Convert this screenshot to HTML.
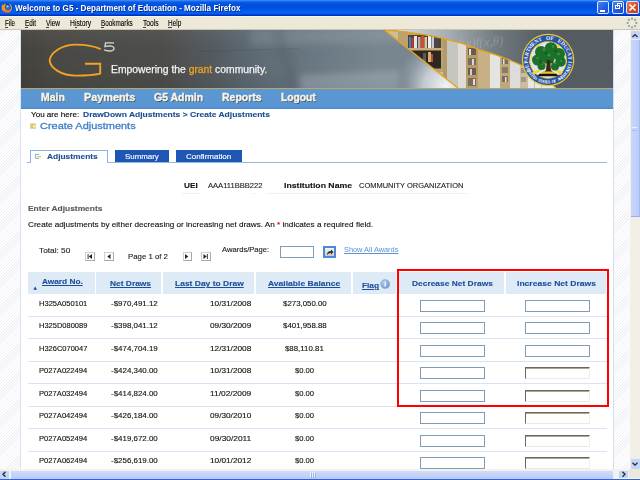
<!DOCTYPE html><html><head><meta charset="utf-8"><style>
html,body{margin:0;padding:0;width:640px;height:480px;overflow:hidden;background:#fff;}
body{position:relative;font-family:"Liberation Sans",sans-serif;}
.t{position:absolute;white-space:nowrap;-webkit-text-stroke:0.12px currentColor;}
.r{position:absolute;}
</style></head><body>
<div class="r" style="left:0px;top:0px;width:640px;height:16px;background:linear-gradient(#3f8ff8 0px,#2a7af2 1px,#0a5ae6 2px,#0050de 5px,#0052e2 9px,#0062f4 11.5px,#0060f0 14px,#0036c8 14.8px,#0030b8 16px);"></div>
<svg class="r" style="left:0px;top:1px" width="14" height="14" viewBox="0 0 14 14"><circle cx="7.6" cy="6.6" r="3.6" fill="#14246a"/><circle cx="7.8" cy="6.4" r="2.7" fill="#2f6ad0"/><circle cx="7.4" cy="5.4" r="1.1" fill="#9cc4f2"/><path d="M2.4 3.2 L3.6 3.8 L5 2.6 L6 3.4 Q4.6 4.6 4.8 6.8 Q5.2 9.2 7.8 9.6 Q10.2 9.6 10.9 7.2 Q11.4 8.8 10.6 10.2 Q9.2 11.8 6.8 11.7 Q2.8 11.4 1.6 8 Q1.2 5.2 2.4 3.2Z" fill="#f59a18"/><path d="M1.9 8.6 Q3 11.4 6.8 11.7 Q9.4 11.8 10.6 10.2 Q8.4 11 6.2 10.6 Q3.4 10 1.9 8.6Z" fill="#dc4a18"/><path d="M8.8 2.6 Q11.8 3.4 11.8 7 Q11.6 9.2 10.6 10.2 Q11.2 8.2 10.9 6.2 Q10.4 4 8.8 2.6Z" fill="#f6c828"/><path d="M3 3.5 L3.4 2.4 L4.2 3.3Z" fill="#3a1a08"/></svg>
<div class="t" style="left:14.60px;top:2px;font-size:9.5px;line-height:11px;font-weight:bold;color:#fff;letter-spacing:0px;transform:scaleX(0.8529);transform-origin:0 0;-webkit-text-stroke:0;text-shadow:1px 1px 0 #0a2a80;">Welcome to G5 - Department of Education - Mozilla Firefox</div>
<div class="r" style="left:597.2px;top:1.2px;width:12.3px;height:12.8px;background:linear-gradient(135deg,#4a82f0,#1f5ae6 60%,#1a50d8);border:1px solid #d8e4fa;border-radius:2px;box-sizing:border-box;"></div>
<div class="r" style="left:611.7px;top:1.2px;width:12.4px;height:12.8px;background:linear-gradient(135deg,#4a82f0,#1f5ae6 60%,#1a50d8);border:1px solid #d8e4fa;border-radius:2px;box-sizing:border-box;"></div>
<div class="r" style="left:626px;top:1.2px;width:12.6px;height:12.8px;background:linear-gradient(135deg,#f07a50,#dc4a24 60%,#c83a18);border:1px solid #d8e4fa;border-radius:2px;box-sizing:border-box;"></div>
<div class="r" style="left:600px;top:10px;width:5px;height:2px;background:#fff;"></div>
<div class="r" style="left:615px;top:5px;width:5px;height:4px;border:1px solid #fff;box-sizing:border-box;"></div>
<div class="r" style="left:617px;top:3px;width:5px;height:4px;border:1px solid #fff;border-bottom:none;box-sizing:border-box;"></div>
<svg class="r" style="left:628px;top:3px" width="9" height="9" viewBox="0 0 9 9"><path d="M1.5 1.5L7.5 7.5M7.5 1.5L1.5 7.5" stroke="#fff" stroke-width="1.6"/></svg>
<div class="r" style="left:0px;top:16px;width:640px;height:14px;background:#ece9d8;border-top:1px solid #f8f6ee;box-sizing:border-box;"></div>
<div class="r" style="left:0px;top:29px;width:640px;height:1px;background:#c9c5b2;"></div>
<div class="t" style="left:4.70px;top:18px;font-size:8.6px;line-height:10px;font-weight:normal;color:#000;letter-spacing:0px;transform:scaleX(0.7288);transform-origin:0 0;">File</div>
<div class="r" style="left:4.7px;top:27px;width:3.2px;height:0.8px;background:#444;"></div>
<div class="t" style="left:25.00px;top:18px;font-size:8.6px;line-height:10px;font-weight:normal;color:#000;letter-spacing:0px;transform:scaleX(0.7423);transform-origin:0 0;">Edit</div>
<div class="r" style="left:25px;top:27px;width:3.2px;height:0.8px;background:#444;"></div>
<div class="t" style="left:46.00px;top:18px;font-size:8.6px;line-height:10px;font-weight:normal;color:#000;letter-spacing:0px;transform:scaleX(0.7574);transform-origin:0 0;">View</div>
<div class="r" style="left:46px;top:27px;width:3.2px;height:0.8px;background:#444;"></div>
<div class="t" style="left:69.50px;top:18px;font-size:8.6px;line-height:10px;font-weight:normal;color:#000;letter-spacing:0px;transform:scaleX(0.7886);transform-origin:0 0;">History</div>
<div class="r" style="left:74.7px;top:27px;width:2.6px;height:0.8px;background:#444;"></div>
<div class="t" style="left:101.00px;top:18px;font-size:8.6px;line-height:10px;font-weight:normal;color:#000;letter-spacing:0px;transform:scaleX(0.7393);transform-origin:0 0;">Bookmarks</div>
<div class="r" style="left:101px;top:27px;width:3.2px;height:0.8px;background:#444;"></div>
<div class="t" style="left:142.70px;top:18px;font-size:8.6px;line-height:10px;font-weight:normal;color:#000;letter-spacing:0px;transform:scaleX(0.7770);transform-origin:0 0;">Tools</div>
<div class="r" style="left:142.7px;top:27px;width:3.2px;height:0.8px;background:#444;"></div>
<div class="t" style="left:168.40px;top:18px;font-size:8.6px;line-height:10px;font-weight:normal;color:#000;letter-spacing:0px;transform:scaleX(0.7520);transform-origin:0 0;">Help</div>
<div class="r" style="left:168.4px;top:27px;width:3.2px;height:0.8px;background:#444;"></div>
<svg class="r" style="left:626px;top:17px" width="12" height="12" viewBox="0 0 12 12"><circle cx="10.30" cy="6.00" r="1.15" fill="#a2a2a2"/><circle cx="9.04" cy="9.04" r="1.15" fill="#a2a2a2"/><circle cx="6.00" cy="10.30" r="1.15" fill="#a2a2a2"/><circle cx="2.96" cy="9.04" r="1.15" fill="#a2a2a2"/><circle cx="1.70" cy="6.00" r="1.15" fill="#a2a2a2"/><circle cx="2.96" cy="2.96" r="1.15" fill="#a2a2a2"/><circle cx="6.00" cy="1.70" r="1.15" fill="#a2a2a2"/><circle cx="9.04" cy="2.96" r="1.15" fill="#a2a2a2"/></svg>
<div class="r" style="left:0px;top:30px;width:629px;height:440px;background:repeating-linear-gradient(-45deg,#ffffff 0px,#ffffff 1.2px,#f0f2f6 1.1px,#f0f2f6 2.2px);"></div>
<div class="r" style="left:20px;top:30px;width:594px;height:440px;background:#fff;border-left:1px solid #dde3f4;border-right:1px solid #d3dcf2;box-sizing:border-box;"></div>
<svg class="r" style="left:21px;top:30px" width="592" height="58" viewBox="21 30 592 58">
<defs>
<linearGradient id="bgL" x1="21" y1="0" x2="613" y2="0" gradientUnits="userSpaceOnUse">
 <stop offset="0" stop-color="#43423d"/><stop offset="0.05" stop-color="#494844"/><stop offset="0.24" stop-color="#4c4d4a"/>
 <stop offset="0.32" stop-color="#535a5e"/><stop offset="0.40" stop-color="#5e6b75"/>
 <stop offset="0.50" stop-color="#6b7984"/><stop offset="0.6" stop-color="#788690"/><stop offset="1" stop-color="#7a8892"/>
</linearGradient>
<linearGradient id="vsh" x1="0" y1="30" x2="0" y2="88" gradientUnits="userSpaceOnUse">
 <stop offset="0" stop-color="#ffffff" stop-opacity="0.05"/><stop offset="0.6" stop-color="#000" stop-opacity="0"/><stop offset="1" stop-color="#000" stop-opacity="0.06"/>
</linearGradient>
<radialGradient id="cloud1" cx="446" cy="86" r="50" gradientUnits="userSpaceOnUse">
 <stop offset="0" stop-color="#f2f4f6" stop-opacity="1"/><stop offset="0.45" stop-color="#d0d6db" stop-opacity="0.85"/><stop offset="1" stop-color="#9aa6ae" stop-opacity="0"/>
</radialGradient>
<linearGradient id="sky" x1="400" y1="0" x2="560" y2="0" gradientUnits="userSpaceOnUse">
 <stop offset="0" stop-color="#d2d7db"/><stop offset="0.3" stop-color="#a6aeb4"/><stop offset="0.6" stop-color="#727b81"/><stop offset="0.85" stop-color="#596166"/><stop offset="1" stop-color="#545c61"/>
</linearGradient>
<linearGradient id="shelfg" x1="385" y1="0" x2="560" y2="0" gradientUnits="userSpaceOnUse">
 <stop offset="0" stop-color="#c9b68a"/><stop offset="0.55" stop-color="#cdbf9c"/><stop offset="1" stop-color="#e4e2da"/>
</linearGradient>
<filter id="soft" x="-20%" y="-50%" width="140%" height="200%"><feGaussianBlur stdDeviation="3"/></filter>
<clipPath id="lens"><path d="M385 30.5 Q421 59 458 88 L556 88 Q530 64 480 50 Q448 36 392 30.5 Z"/></clipPath>
</defs>
<rect x="21" y="30" width="592" height="58" fill="url(#bgL)"/>
<rect x="21" y="30" width="592" height="58" fill="url(#vsh)"/>
<g filter="url(#soft)"><path d="M250 30 L400 30 L400 42 L250 46Z" fill="#9aa6b0" opacity="0.25"/><path d="M300 75 L400 70 L400 92 L300 92Z" fill="#b8c2ca" opacity="0.35"/><path d="M270 30 L284 30 L302 88 L288 88Z" fill="#3a4650" opacity="0.15"/></g><path d="M200 51 L300 48 L300 49 L200 52Z" fill="#2a3038" opacity="0.12"/>

<rect x="330" y="30" width="130" height="58" fill="url(#cloud1)"/>
<!-- upper-right sky/chalkboard -->
<path d="M392 30 Q448 36 480 50 Q530 64 556 88 L613 88 L613 30 Z" fill="url(#sky)"/>
<text x="458" y="48" font-family="Liberation Serif" font-style="italic" font-size="13" fill="#c4cacf" opacity="0.3" transform="rotate(-4 458 48)">f(x)f(x,θ)</text>
<!-- bookshelf lens -->
<g clip-path="url(#lens)">
<rect x="385" y="30" width="175" height="58" fill="#cdbd98"/>
<rect x="398" y="30" width="46" height="42" fill="#bca270"/>
<rect x="408" y="35" width="33" height="13" fill="#4a443c"/>
<rect x="409" y="37" width="2" height="11" fill="#4a7ab8"/><rect x="411.5" y="38" width="2" height="10" fill="#c83a2a"/><rect x="414" y="36" width="3" height="12" fill="#e8e6dc"/><rect x="418" y="37" width="2.5" height="11" fill="#b0b0a8"/><rect x="421" y="36" width="3" height="12" fill="#d84a30"/><rect x="424.5" y="37" width="2.5" height="11" fill="#d8c8a0"/><rect x="428" y="36" width="3" height="12" fill="#f0f0ec"/><rect x="431.5" y="37" width="2.5" height="11" fill="#c8ccd0"/><rect x="435" y="36" width="3" height="12" fill="#4a4a48"/>
<rect x="408" y="48" width="35" height="2.5" fill="#c8ae7c"/>
<rect x="410" y="50.5" width="31" height="18" fill="#2c2822"/><rect x="428" y="52" width="3" height="10" fill="#d8b070"/><rect x="431" y="54" width="2" height="8" fill="#c84a30"/><rect x="423" y="53" width="3" height="9" fill="#5a5a58"/>
<rect x="443" y="33" width="4" height="55" fill="#b49a68"/>
<rect x="447" y="36" width="11" height="52" fill="#c6c6c0"/>
<rect x="458" y="38" width="8" height="50" fill="#dedcd4"/>
<rect x="466" y="44" width="12" height="44" fill="#b89c68"/>
<rect x="468" y="48" width="8" height="7" fill="#6a5c4c"/><rect x="468" y="58" width="8" height="7" fill="#7a6c5c"/><rect x="468" y="68" width="8" height="7" fill="#6a5c4c"/><rect x="468" y="78" width="8" height="8" fill="#7a6c5c"/>
<rect x="469" y="49" width="2" height="6" fill="#e8e0d0"/><rect x="472" y="59" width="2" height="6" fill="#d8d8d8"/><rect x="470" y="69" width="2" height="6" fill="#d0d0d0"/><rect x="473" y="79" width="2" height="6" fill="#e0e0e0"/>
<rect x="478" y="46" width="12" height="42" fill="#c7b184"/>
<rect x="490" y="50" width="10" height="38" fill="#e4e4e0"/>
<rect x="500" y="54" width="10" height="34" fill="#c0a878"/>
<rect x="502" y="58" width="6" height="6" fill="#7a6c5c"/><rect x="502" y="67" width="6" height="6" fill="#8a7c6c"/><rect x="502" y="76" width="6" height="6" fill="#7a6c5c"/>
<rect x="503" y="59" width="1.5" height="5" fill="#e0e0e0"/><rect x="505" y="77" width="1.5" height="5" fill="#e0e0e0"/>
<rect x="510" y="58" width="10" height="30" fill="#dcdcd8"/>
<rect x="520" y="62" width="8" height="26" fill="#cbbd9e"/>
<rect x="521" y="68" width="5" height="5" fill="#9a9088"/><rect x="521" y="77" width="5" height="5" fill="#a09890"/>
<rect x="528" y="64" width="30" height="24" fill="#e8e8e6"/>
<rect x="534" y="66" width="1" height="22" fill="#c0c0bc"/><rect x="541" y="70" width="1" height="18" fill="#c8c8c4"/>
</g>
<path d="M385 30.5 Q421 59 458 88" stroke="#e6a31c" stroke-width="1.3" fill="none"/>
<path d="M392 30.5 Q448 36 480 50 Q530 64 556 88" stroke="#e6a31c" stroke-width="1.3" fill="none"/>
<path d="M385 30.5 L392 30.5" stroke="#e6a31c" stroke-width="1.3"/>
<!-- G5 logo -->
<path d="M100.8 49.2 C94 45.8 86 44.6 76 44.6 C61 44.6 50.5 53 49.6 60.3 C50.5 68 61 75.6 76 75.6 C88 75.6 96 74.6 100.2 73.6 L100.2 63.8 L85 63.8" stroke="#f2a224" stroke-width="1.9" fill="none"/>
<path d="M114 42.8 L105.5 42.8 L105 46.6 Q107 45.8 109.5 45.8 Q114 46 114 48.5 Q114 51 109.5 51 Q106 51 104 49.8" stroke="#d6d6d6" stroke-width="1.3" fill="none"/>
<!-- seal -->
<circle cx="548.1" cy="60" r="26.2" fill="#f2c81e"/>
<circle cx="548.1" cy="60" r="25" fill="#2452a8"/>
<g font-family="Liberation Serif" font-size="5.4" font-weight="bold" fill="#f4f6fa"><text x="529.87" y="69.16" transform="rotate(-116.7 529.87 69.16)" text-anchor="middle">D</text><text x="528.50" y="65.65" transform="rotate(-106.1 528.50 65.65)" text-anchor="middle">E</text><text x="527.79" y="61.95" transform="rotate(-95.5 527.79 61.95)" text-anchor="middle">P</text><text x="527.78" y="58.18" transform="rotate(-84.9 527.78 58.18)" text-anchor="middle">A</text><text x="528.46" y="54.47" transform="rotate(-74.3 528.46 54.47)" text-anchor="middle">R</text><text x="529.82" y="50.95" transform="rotate(-63.7 529.82 50.95)" text-anchor="middle">T</text><text x="531.80" y="47.74" transform="rotate(-53.0 531.80 47.74)" text-anchor="middle">M</text><text x="534.34" y="44.94" transform="rotate(-42.4 534.34 44.94)" text-anchor="middle">E</text><text x="537.34" y="42.67" transform="rotate(-31.8 537.34 42.67)" text-anchor="middle">N</text><text x="540.72" y="40.98" transform="rotate(-21.2 540.72 40.98)" text-anchor="middle">T</text><text x="548.10" y="39.60" transform="rotate(0.0 548.10 39.60)" text-anchor="middle">O</text><text x="551.86" y="39.95" transform="rotate(10.6 551.86 39.95)" text-anchor="middle">F</text><text x="558.86" y="42.67" transform="rotate(31.8 558.86 42.67)" text-anchor="middle">E</text><text x="561.86" y="44.94" transform="rotate(42.4 561.86 44.94)" text-anchor="middle">D</text><text x="564.40" y="47.74" transform="rotate(53.0 564.40 47.74)" text-anchor="middle">U</text><text x="566.38" y="50.95" transform="rotate(63.7 566.38 50.95)" text-anchor="middle">C</text><text x="567.74" y="54.47" transform="rotate(74.3 567.74 54.47)" text-anchor="middle">A</text><text x="568.42" y="58.18" transform="rotate(84.9 568.42 58.18)" text-anchor="middle">T</text><text x="568.41" y="61.95" transform="rotate(95.5 568.41 61.95)" text-anchor="middle">I</text><text x="567.70" y="65.65" transform="rotate(106.1 567.70 65.65)" text-anchor="middle">O</text><text x="566.33" y="69.16" transform="rotate(116.7 566.33 69.16)" text-anchor="middle">N</text></g>
<g font-family="Liberation Serif" font-size="4.3" font-weight="bold" fill="#f4f6fa"><text x="527.48" y="71.27" transform="rotate(61.3 527.48 71.27)" text-anchor="middle">U</text><text x="528.62" y="73.14" transform="rotate(56.0 528.62 73.14)" text-anchor="middle">N</text><text x="529.92" y="74.90" transform="rotate(50.7 529.92 74.90)" text-anchor="middle">I</text><text x="531.39" y="76.52" transform="rotate(45.3 531.39 76.52)" text-anchor="middle">T</text><text x="532.99" y="78.00" transform="rotate(40.0 532.99 78.00)" text-anchor="middle">E</text><text x="534.73" y="79.33" transform="rotate(34.7 534.73 79.33)" text-anchor="middle">D</text><text x="538.54" y="81.47" transform="rotate(24.0 538.54 81.47)" text-anchor="middle">S</text><text x="540.58" y="82.26" transform="rotate(18.7 540.58 82.26)" text-anchor="middle">T</text><text x="542.68" y="82.87" transform="rotate(13.3 542.68 82.87)" text-anchor="middle">A</text><text x="544.83" y="83.27" transform="rotate(8.0 544.83 83.27)" text-anchor="middle">T</text><text x="547.01" y="83.47" transform="rotate(2.7 547.01 83.47)" text-anchor="middle">E</text><text x="549.19" y="83.47" transform="rotate(-2.7 549.19 83.47)" text-anchor="middle">S</text><text x="553.52" y="82.87" transform="rotate(-13.3 553.52 82.87)" text-anchor="middle">O</text><text x="555.62" y="82.26" transform="rotate(-18.7 555.62 82.26)" text-anchor="middle">F</text><text x="559.61" y="80.49" transform="rotate(-29.3 559.61 80.49)" text-anchor="middle">A</text><text x="561.47" y="79.33" transform="rotate(-34.7 561.47 79.33)" text-anchor="middle">M</text><text x="563.21" y="78.00" transform="rotate(-40.0 563.21 78.00)" text-anchor="middle">E</text><text x="564.81" y="76.52" transform="rotate(-45.3 564.81 76.52)" text-anchor="middle">R</text><text x="566.28" y="74.90" transform="rotate(-50.7 566.28 74.90)" text-anchor="middle">I</text><text x="567.58" y="73.14" transform="rotate(-56.0 567.58 73.14)" text-anchor="middle">C</text><text x="568.72" y="71.27" transform="rotate(-61.3 568.72 71.27)" text-anchor="middle">A</text></g>
<circle cx="530" cy="62" r="0.9" fill="#fff"/><circle cx="566.2" cy="62" r="0.9" fill="#fff"/>
<circle cx="548.1" cy="60" r="18.8" fill="#f2c81e"/>
<circle cx="548.1" cy="60" r="17.9" fill="#dbe6f2"/>
<g fill="#f3d23a"><path d="M548 66 L531 56 L531.5 60Z M548 66 L532 72 L534 75Z M548 66 L565 56 L564.5 60Z M548 66 L563 72 L561 75Z M548 64 L536 46 L539 45Z M548 64 L560 46 L557 45Z M548 64 L548 43 L546 43Z"/></g>
<g fill="#1d7029">
<circle cx="541" cy="52" r="6"/><circle cx="551" cy="48.5" r="6.3"/><circle cx="559" cy="54" r="6"/><circle cx="537.5" cy="60" r="5.5"/><circle cx="560.5" cy="61.5" r="5.3"/><circle cx="548" cy="57" r="7"/><circle cx="541.5" cy="66" r="4"/><circle cx="555" cy="66.5" r="4"/>
</g>
<g fill="#38984a" opacity="0.85"><circle cx="544" cy="49.5" r="1.4"/><circle cx="553" cy="46.5" r="1.3"/><circle cx="558.5" cy="54" r="1.4"/><circle cx="537.5" cy="58" r="1.2"/><circle cx="549" cy="55" r="1.5"/><circle cx="561" cy="61" r="1.1"/><circle cx="542" cy="64" r="1.1"/><circle cx="555" cy="63" r="1.2"/></g>
<g fill="#145a20"><circle cx="546" cy="53" r="1.5"/><circle cx="556" cy="51" r="1.4"/><circle cx="541" cy="62" r="1.6"/><circle cx="552" cy="62" r="1.5"/></g>
<path d="M547 60 L546 70 L542 74.5 L555 74.5 L551 70 L550 60 Z" fill="#3a2812"/>
<path d="M537 76.3 L559 76.3 L556 73.5 L540 73.5Z" fill="#1a1408"/>
<path d="M540 73.8 L556 73.8 L553 71.5 L543 71.5Z" fill="#e8c030"/>
</svg>
<div class="t" style="left:110.70px;top:63px;font-size:10.6px;line-height:12px;font-weight:normal;color:#f4f4f4;letter-spacing:0px;transform:scaleX(0.9766);transform-origin:0 0;-webkit-text-stroke:0.25px #f4f4f4;">Empowering the <span style="color:#f5a623;-webkit-text-stroke-color:#f5a623">grant</span> community<span style="color:#f5a623">.</span></div>
<div class="r" style="left:21px;top:88px;width:592px;height:1px;background:#c8a458;"></div>
<div class="r" style="left:21px;top:89px;width:592px;height:19.6px;background:linear-gradient(#5b97d3 0px,#5a96d2 18px,#4c89cf 19.6px);"></div>
<div class="t" style="left:41.25px;top:92px;font-size:10.3px;line-height:11px;font-weight:bold;color:#f8f4e8;letter-spacing:0px;transform:scaleX(1.0123);transform-origin:0 0;-webkit-text-stroke:0.35px #f8f4e8;text-shadow:0.7px 0.7px 0.5px #3a4a5a;">Main</div>
<div class="t" style="left:83.75px;top:92px;font-size:10.3px;line-height:11px;font-weight:bold;color:#f8f4e8;letter-spacing:0px;transform:scaleX(1.0531);transform-origin:0 0;-webkit-text-stroke:0.35px #f8f4e8;text-shadow:0.7px 0.7px 0.5px #3a4a5a;">Payments</div>
<div class="t" style="left:153.80px;top:92px;font-size:10.3px;line-height:11px;font-weight:bold;color:#f8f4e8;letter-spacing:0px;transform:scaleX(1.0195);transform-origin:0 0;-webkit-text-stroke:0.35px #f8f4e8;text-shadow:0.7px 0.7px 0.5px #3a4a5a;">G5 Admin</div>
<div class="t" style="left:222.30px;top:92px;font-size:10.3px;line-height:11px;font-weight:bold;color:#f8f4e8;letter-spacing:0px;transform:scaleX(1.0201);transform-origin:0 0;-webkit-text-stroke:0.35px #f8f4e8;text-shadow:0.7px 0.7px 0.5px #3a4a5a;">Reports</div>
<div class="t" style="left:280.80px;top:92px;font-size:10.3px;line-height:11px;font-weight:bold;color:#f8f4e8;letter-spacing:0px;transform:scaleX(0.9975);transform-origin:0 0;-webkit-text-stroke:0.35px #f8f4e8;text-shadow:0.7px 0.7px 0.5px #3a4a5a;">Logout</div>
<div class="t" style="left:30.60px;top:110px;font-size:8px;line-height:9px;font-weight:normal;color:#000;letter-spacing:0px;transform:scaleX(1.0085);transform-origin:0 0;">You are here:</div>
<div class="t" style="left:83.00px;top:110px;font-size:8px;line-height:9px;font-weight:bold;color:#1d4e90;letter-spacing:0px;transform:scaleX(1.0613);transform-origin:0 0;">DrawDown Adjustments &gt; Create Adjustments</div>
<svg class="r" style="left:29px;top:122px" width="8" height="8"><rect x="1" y="1.2" width="6" height="5.8" fill="#c4d8f6"/><circle cx="3.9" cy="4.1" r="2.4" fill="#f5c816"/><rect x="4" y="3.3" width="2" height="2" fill="#f4f4f0"/></svg>
<div class="t" style="left:40.30px;top:120px;font-size:9.5px;line-height:11px;font-weight:normal;color:#3f7fc6;letter-spacing:0px;transform:scaleX(1.1532);transform-origin:0 0;-webkit-text-stroke:0.3px #3f7fc6;">Create Adjustments</div>
<div class="r" style="left:27px;top:162px;width:580px;height:1px;background:#95b8e2;"></div>
<div class="r" style="left:30px;top:150px;width:78px;height:13px;background:#fff;border:1px solid #8fb2e0;border-bottom:none;box-sizing:border-box;"></div>
<svg class="r" style="left:34px;top:153px" width="9" height="7"><path d="M5.2 1.4 L1.4 1.4 L1.4 5.4 L5.2 5.4" stroke="#6aa0e0" stroke-width="0.9" fill="none"/><rect x="3.3" y="3" width="3.7" height="1.1" fill="#f2c410"/></svg>
<div class="t" style="left:47.20px;top:152px;font-size:8px;line-height:9px;font-weight:bold;color:#1d4e90;letter-spacing:0px;transform:scaleX(1.0465);transform-origin:0 0;">Adjustments</div>
<div class="r" style="left:114.5px;top:150px;width:54.3px;height:12px;background:#1d57b3;"></div>
<div class="r" style="left:175.75px;top:150px;width:66px;height:12px;background:#1d57b3;"></div>
<div class="t" style="left:125.00px;top:152px;font-size:8px;line-height:9px;font-weight:normal;color:#fff;letter-spacing:0px;transform:scaleX(0.9861);transform-origin:0 0;">Summary</div>
<div class="t" style="left:185.75px;top:152px;font-size:8px;line-height:9px;font-weight:normal;color:#fff;letter-spacing:0px;transform:scaleX(0.9978);transform-origin:0 0;">Confirmation</div>
<div class="t" style="left:183.75px;top:181px;font-size:8px;line-height:9px;font-weight:bold;color:#111;letter-spacing:0px;transform:scaleX(1.0310);transform-origin:0 0;">UEI</div>
<div class="t" style="left:208.00px;top:181px;font-size:8px;line-height:9px;font-weight:normal;color:#222;letter-spacing:0px;transform:scaleX(0.9474);transform-origin:0 0;">AAA111BBB222</div>
<div class="t" style="left:284.00px;top:181px;font-size:8px;line-height:9px;font-weight:bold;color:#111;letter-spacing:0px;transform:scaleX(1.0851);transform-origin:0 0;">Institution Name</div>
<div class="t" style="left:359.00px;top:181px;font-size:8px;line-height:9px;font-weight:normal;color:#222;letter-spacing:0px;transform:scaleX(0.9346);transform-origin:0 0;">COMMUNITY ORGANIZATION</div>
<div class="r" style="left:182px;top:193px;width:19px;height:1px;background:#f0f0f0;"></div>
<div class="r" style="left:251px;top:193px;width:6px;height:1px;background:#f4f4f4;"></div>
<div class="r" style="left:267px;top:193px;width:201px;height:1px;background:#f0f0f0;"></div>
<div class="t" style="left:27.90px;top:204px;font-size:8px;line-height:9px;font-weight:bold;color:#5a5a5a;letter-spacing:0px;transform:scaleX(1.0505);transform-origin:0 0;">Enter Adjustments</div>
<div class="t" style="left:27.90px;top:220px;font-size:8px;line-height:9px;font-weight:normal;color:#111;letter-spacing:0px;transform:scaleX(1.0184);transform-origin:0 0;">Create adjustments by either decreasing or increasing net draws. An <span style="color:#e00">*</span> indicates a required field.</div>
<div class="t" style="left:39.00px;top:246px;font-size:8px;line-height:9px;font-weight:normal;color:#222;letter-spacing:0px;transform:scaleX(1.0350);transform-origin:0 0;">Total: 50</div>
<div class="r" style="left:85.3px;top:252px;width:9.5px;height:9px;background:#fff;border:1px solid #d0d0d0;border-right-color:#a8a8a8;border-bottom-color:#a8a8a8;box-sizing:border-box;"></div><svg class="r" style="left:85px;top:252px" width="10" height="9"><rect x="2.5" y="2" width="1.2" height="5" fill="#555"/><path d="M7 2 L3.8 4.5 L7 7Z" fill="#222"/></svg>
<div class="r" style="left:104px;top:252px;width:9.5px;height:9px;background:#fff;border:1px solid #d0d0d0;border-right-color:#a8a8a8;border-bottom-color:#a8a8a8;box-sizing:border-box;"></div><svg class="r" style="left:104px;top:252px" width="10" height="9"><path d="M6.5 2 L3.3 4.5 L6.5 7Z" fill="#222"/></svg>
<div class="r" style="left:182.5px;top:252px;width:9.5px;height:9px;background:#fff;border:1px solid #d0d0d0;border-right-color:#a8a8a8;border-bottom-color:#a8a8a8;box-sizing:border-box;"></div><svg class="r" style="left:182px;top:252px" width="10" height="9"><path d="M3 2 L6.2 4.5 L3 7Z" fill="#222"/></svg>
<div class="r" style="left:201px;top:252px;width:9.5px;height:9px;background:#fff;border:1px solid #d0d0d0;border-right-color:#a8a8a8;border-bottom-color:#a8a8a8;box-sizing:border-box;"></div><svg class="r" style="left:201px;top:252px" width="10" height="9"><path d="M2.5 2 L5.7 4.5 L2.5 7Z" fill="#222"/><rect x="5.8" y="2" width="1.2" height="5" fill="#555"/></svg>
<div class="t" style="left:127.80px;top:252px;font-size:8px;line-height:9px;font-weight:normal;color:#222;letter-spacing:0px;transform:scaleX(0.9750);transform-origin:0 0;">Page 1 of 2</div>
<div class="t" style="left:222.25px;top:246px;font-size:7px;line-height:7px;font-weight:normal;color:#222;letter-spacing:0px;transform:scaleX(1.0851);transform-origin:0 0;">Awards/Page:</div>
<div class="r" style="left:280px;top:246px;width:34px;height:12px;background:#fff;border:1px solid #7f9db9;box-sizing:border-box;"></div>
<div class="r" style="left:323px;top:245.6px;width:12.6px;height:12.2px;background:linear-gradient(#f4f4f4,#c8c8c8);border:2px solid #4d88d8;box-sizing:border-box;"></div>
<svg class="r" style="left:323px;top:246px" width="13" height="12"><path d="M4 9 Q4 5 8 5 L8 3.5 L10.5 6 L8 8.5 L8 7 Q5.5 7 4 9Z" fill="#333"/></svg>
<div class="t" style="left:344.40px;top:246px;font-size:7px;line-height:7px;font-weight:normal;color:#5a92d6;letter-spacing:0px;transform:scaleX(1.0528);transform-origin:0 0;text-decoration:underline;-webkit-text-stroke:0;">Show All Awards</div>
<div class="r" style="left:27.5px;top:272px;width:67.1px;height:21.5px;background:#deebf7;"></div>
<div class="r" style="left:96.25px;top:272px;width:65.0px;height:21.5px;background:#deebf7;"></div>
<div class="r" style="left:163px;top:272px;width:90.75px;height:21.5px;background:#deebf7;"></div>
<div class="r" style="left:255.5px;top:272px;width:95.25px;height:21.5px;background:#deebf7;"></div>
<div class="r" style="left:352.5px;top:272px;width:43.5px;height:21.5px;background:#deebf7;"></div>
<div class="r" style="left:399px;top:272px;width:104.75px;height:21.5px;background:#deebf7;"></div>
<div class="r" style="left:505.6px;top:272px;width:100.4px;height:21.5px;background:#deebf7;"></div>
<div class="t" style="left:42.00px;top:277px;font-size:7.5px;line-height:9px;font-weight:bold;color:#1d4e9a;letter-spacing:0px;transform:scaleX(1.1028);transform-origin:0 0;text-decoration:underline;">Award No.</div>
<svg class="r" style="left:33px;top:286px" width="5" height="4"><path d="M0.3 3.8 L2.2 0.5 L4.1 3.8Z" fill="#1d4e9a"/></svg>
<div class="t" style="left:109.50px;top:279px;font-size:7.5px;line-height:9px;font-weight:bold;color:#1d4e9a;letter-spacing:0px;transform:scaleX(1.1178);transform-origin:0 0;text-decoration:underline;">Net Draws</div>
<div class="t" style="left:175.00px;top:279px;font-size:7.5px;line-height:9px;font-weight:bold;color:#1d4e9a;letter-spacing:0px;transform:scaleX(1.1298);transform-origin:0 0;text-decoration:underline;">Last Day to Draw</div>
<div class="t" style="left:268.25px;top:279px;font-size:7.5px;line-height:9px;font-weight:bold;color:#1d4e9a;letter-spacing:0px;transform:scaleX(1.1377);transform-origin:0 0;text-decoration:underline;">Available Balance</div>
<div class="t" style="left:361.75px;top:281px;font-size:7.5px;line-height:9px;font-weight:bold;color:#1d4e9a;letter-spacing:0px;transform:scaleX(1.1026);transform-origin:0 0;text-decoration:underline;">Flag</div>
<svg class="r" style="left:379.5px;top:278.8px" width="10.5" height="10.5"><defs><radialGradient id="ig" cx="0.4" cy="0.35" r="0.7"><stop offset="0" stop-color="#b8d2f2"/><stop offset="1" stop-color="#5a8fd4"/></radialGradient></defs><circle cx="5.2" cy="5.1" r="4.6" fill="url(#ig)" stroke="#aeb8c4" stroke-width="0.8"/><rect x="4.6" y="3.6" width="1.2" height="4.2" fill="#fff"/><rect x="4.6" y="2.2" width="1.2" height="0.9" fill="#fff"/></svg>
<div class="t" style="left:411.90px;top:279px;font-size:7.5px;line-height:9px;font-weight:bold;color:#1d4e9a;letter-spacing:0px;transform:scaleX(1.1210);transform-origin:0 0;">Decrease Net Draws</div>
<div class="t" style="left:517.25px;top:279px;font-size:7.5px;line-height:9px;font-weight:bold;color:#1d4e9a;letter-spacing:0px;transform:scaleX(1.1416);transform-origin:0 0;">Increase Net Draws</div>
<div class="r" style="left:27.5px;top:315.8px;width:579.5px;height:1px;background:#d8e4f3;"></div>
<div class="t" style="left:38.70px;top:300px;font-size:7px;line-height:7px;font-weight:normal;color:#111;letter-spacing:0px;transform:scaleX(1.0790);transform-origin:0 0;">H325A050101</div>
<div class="t" style="left:111.25px;top:300px;font-size:7px;line-height:7px;font-weight:normal;color:#111;letter-spacing:0px;transform:scaleX(1.1331);transform-origin:0 0;">-$970,491.12</div>
<div class="t" style="left:210.00px;top:300px;font-size:7px;line-height:7px;font-weight:normal;color:#111;letter-spacing:0px;transform:scaleX(1.1774);transform-origin:0 0;">10/31/2008</div>
<div class="t" style="left:282.52px;top:300px;font-size:7px;line-height:7px;font-weight:normal;color:#111;letter-spacing:0px;transform:scaleX(1.1239);transform-origin:0 0;">$273,050.00</div>
<div class="r" style="left:420px;top:299.9px;width:64.8px;height:12px;background:#fff;border:1px solid #7f9db9;box-sizing:border-box;"></div>
<div class="r" style="left:525.25px;top:299.9px;width:64.5px;height:12px;background:#fff;border:1px solid #7f9db9;box-sizing:border-box;"></div>
<div class="r" style="left:27.5px;top:338.3px;width:579.5px;height:1px;background:#d8e4f3;"></div>
<div class="t" style="left:38.70px;top:322px;font-size:7px;line-height:7px;font-weight:normal;color:#111;letter-spacing:0px;transform:scaleX(1.0698);transform-origin:0 0;">H325D080089</div>
<div class="t" style="left:111.25px;top:322px;font-size:7px;line-height:7px;font-weight:normal;color:#111;letter-spacing:0px;transform:scaleX(1.1331);transform-origin:0 0;">-$398,041.12</div>
<div class="t" style="left:210.00px;top:322px;font-size:7px;line-height:7px;font-weight:normal;color:#111;letter-spacing:0px;transform:scaleX(1.1774);transform-origin:0 0;">09/30/2009</div>
<div class="t" style="left:282.52px;top:322px;font-size:7px;line-height:7px;font-weight:normal;color:#111;letter-spacing:0px;transform:scaleX(1.1239);transform-origin:0 0;">$401,958.88</div>
<div class="r" style="left:420px;top:322.4px;width:64.8px;height:12px;background:#fff;border:1px solid #7f9db9;box-sizing:border-box;"></div>
<div class="r" style="left:525.25px;top:322.4px;width:64.5px;height:12px;background:#fff;border:1px solid #7f9db9;box-sizing:border-box;"></div>
<div class="r" style="left:27.5px;top:360.8px;width:579.5px;height:1px;background:#d8e4f3;"></div>
<div class="t" style="left:38.70px;top:345px;font-size:7px;line-height:7px;font-weight:normal;color:#111;letter-spacing:0px;transform:scaleX(1.0698);transform-origin:0 0;">H326C070047</div>
<div class="t" style="left:111.25px;top:345px;font-size:7px;line-height:7px;font-weight:normal;color:#111;letter-spacing:0px;transform:scaleX(1.1331);transform-origin:0 0;">-$474,704.19</div>
<div class="t" style="left:210.00px;top:345px;font-size:7px;line-height:7px;font-weight:normal;color:#111;letter-spacing:0px;transform:scaleX(1.1774);transform-origin:0 0;">12/31/2008</div>
<div class="t" style="left:285.02px;top:345px;font-size:7px;line-height:7px;font-weight:normal;color:#111;letter-spacing:0px;transform:scaleX(1.1227);transform-origin:0 0;">$88,110.81</div>
<div class="r" style="left:420px;top:344.9px;width:64.8px;height:12px;background:#fff;border:1px solid #7f9db9;box-sizing:border-box;"></div>
<div class="r" style="left:525.25px;top:344.9px;width:64.5px;height:12px;background:#fff;border:1px solid #7f9db9;box-sizing:border-box;"></div>
<div class="r" style="left:27.5px;top:383.3px;width:579.5px;height:1px;background:#d8e4f3;"></div>
<div class="t" style="left:38.70px;top:367px;font-size:7px;line-height:7px;font-weight:normal;color:#111;letter-spacing:0px;transform:scaleX(1.0884);transform-origin:0 0;">P027A022494</div>
<div class="t" style="left:111.25px;top:367px;font-size:7px;line-height:7px;font-weight:normal;color:#111;letter-spacing:0px;transform:scaleX(1.1331);transform-origin:0 0;">-$424,340.00</div>
<div class="t" style="left:210.00px;top:367px;font-size:7px;line-height:7px;font-weight:normal;color:#111;letter-spacing:0px;transform:scaleX(1.1774);transform-origin:0 0;">10/31/2008</div>
<div class="t" style="left:294.90px;top:367px;font-size:7px;line-height:7px;font-weight:normal;color:#111;letter-spacing:0px;transform:scaleX(1.0846);transform-origin:0 0;">$0.00</div>
<div class="r" style="left:420px;top:367.4px;width:64.8px;height:12px;background:#fff;border:1px solid #7f9db9;box-sizing:border-box;"></div>
<div class="r" style="left:525.25px;top:367.4px;width:64.5px;height:12px;background:#fff;border-style:solid;border-width:1px 1px 1px 1px;border-color:#6a685c #eeeeec #efe6e6 #6a685c;box-shadow:inset 0 1px 0 #a9a798;box-sizing:border-box;"></div>
<div class="r" style="left:27.5px;top:405.8px;width:579.5px;height:1px;background:#d8e4f3;"></div>
<div class="t" style="left:38.70px;top:390px;font-size:7px;line-height:7px;font-weight:normal;color:#111;letter-spacing:0px;transform:scaleX(1.0884);transform-origin:0 0;">P027A032494</div>
<div class="t" style="left:111.25px;top:390px;font-size:7px;line-height:7px;font-weight:normal;color:#111;letter-spacing:0px;transform:scaleX(1.1331);transform-origin:0 0;">-$414,824.00</div>
<div class="t" style="left:210.00px;top:390px;font-size:7px;line-height:7px;font-weight:normal;color:#111;letter-spacing:0px;transform:scaleX(1.1951);transform-origin:0 0;">11/02/2009</div>
<div class="t" style="left:294.90px;top:390px;font-size:7px;line-height:7px;font-weight:normal;color:#111;letter-spacing:0px;transform:scaleX(1.0846);transform-origin:0 0;">$0.00</div>
<div class="r" style="left:420px;top:389.9px;width:64.8px;height:12px;background:#fff;border:1px solid #7f9db9;box-sizing:border-box;"></div>
<div class="r" style="left:525.25px;top:389.9px;width:64.5px;height:12px;background:#fff;border-style:solid;border-width:1px 1px 1px 1px;border-color:#6a685c #eeeeec #efe6e6 #6a685c;box-shadow:inset 0 1px 0 #a9a798;box-sizing:border-box;"></div>
<div class="r" style="left:27.5px;top:428.3px;width:579.5px;height:1px;background:#d8e4f3;"></div>
<div class="t" style="left:38.70px;top:412px;font-size:7px;line-height:7px;font-weight:normal;color:#111;letter-spacing:0px;transform:scaleX(1.0884);transform-origin:0 0;">P027A042494</div>
<div class="t" style="left:111.25px;top:412px;font-size:7px;line-height:7px;font-weight:normal;color:#111;letter-spacing:0px;transform:scaleX(1.1331);transform-origin:0 0;">-$426,184.00</div>
<div class="t" style="left:210.00px;top:412px;font-size:7px;line-height:7px;font-weight:normal;color:#111;letter-spacing:0px;transform:scaleX(1.1774);transform-origin:0 0;">09/30/2010</div>
<div class="t" style="left:294.90px;top:412px;font-size:7px;line-height:7px;font-weight:normal;color:#111;letter-spacing:0px;transform:scaleX(1.0846);transform-origin:0 0;">$0.00</div>
<div class="r" style="left:420px;top:412.4px;width:64.8px;height:12px;background:#fff;border:1px solid #7f9db9;box-sizing:border-box;"></div>
<div class="r" style="left:525.25px;top:412.4px;width:64.5px;height:12px;background:#fff;border-style:solid;border-width:1px 1px 1px 1px;border-color:#6a685c #eeeeec #efe6e6 #6a685c;box-shadow:inset 0 1px 0 #a9a798;box-sizing:border-box;"></div>
<div class="r" style="left:27.5px;top:450.8px;width:579.5px;height:1px;background:#d8e4f3;"></div>
<div class="t" style="left:38.70px;top:435px;font-size:7px;line-height:7px;font-weight:normal;color:#111;letter-spacing:0px;transform:scaleX(1.0884);transform-origin:0 0;">P027A052494</div>
<div class="t" style="left:111.25px;top:435px;font-size:7px;line-height:7px;font-weight:normal;color:#111;letter-spacing:0px;transform:scaleX(1.1331);transform-origin:0 0;">-$419,672.00</div>
<div class="t" style="left:210.00px;top:435px;font-size:7px;line-height:7px;font-weight:normal;color:#111;letter-spacing:0px;transform:scaleX(1.1951);transform-origin:0 0;">09/30/2011</div>
<div class="t" style="left:294.90px;top:435px;font-size:7px;line-height:7px;font-weight:normal;color:#111;letter-spacing:0px;transform:scaleX(1.0846);transform-origin:0 0;">$0.00</div>
<div class="r" style="left:420px;top:434.9px;width:64.8px;height:12px;background:#fff;border:1px solid #7f9db9;box-sizing:border-box;"></div>
<div class="r" style="left:525.25px;top:434.9px;width:64.5px;height:12px;background:#fff;border-style:solid;border-width:1px 1px 1px 1px;border-color:#6a685c #eeeeec #efe6e6 #6a685c;box-shadow:inset 0 1px 0 #a9a798;box-sizing:border-box;"></div>
<div class="t" style="left:38.70px;top:457px;font-size:7px;line-height:7px;font-weight:normal;color:#111;letter-spacing:0px;transform:scaleX(1.0884);transform-origin:0 0;">P027A062494</div>
<div class="t" style="left:111.25px;top:457px;font-size:7px;line-height:7px;font-weight:normal;color:#111;letter-spacing:0px;transform:scaleX(1.1331);transform-origin:0 0;">-$256,619.00</div>
<div class="t" style="left:210.00px;top:457px;font-size:7px;line-height:7px;font-weight:normal;color:#111;letter-spacing:0px;transform:scaleX(1.1774);transform-origin:0 0;">10/01/2012</div>
<div class="t" style="left:294.90px;top:457px;font-size:7px;line-height:7px;font-weight:normal;color:#111;letter-spacing:0px;transform:scaleX(1.0846);transform-origin:0 0;">$0.00</div>
<div class="r" style="left:420px;top:457.4px;width:64.8px;height:12px;background:#fff;border:1px solid #7f9db9;box-sizing:border-box;"></div>
<div class="r" style="left:525.25px;top:457.4px;width:64.5px;height:12px;background:#fff;border-style:solid;border-width:1px 1px 1px 1px;border-color:#6a685c #eeeeec #efe6e6 #6a685c;box-shadow:inset 0 1px 0 #a9a798;box-sizing:border-box;"></div>
<div class="r" style="left:397px;top:269.25px;width:212.4px;height:137.6px;border:2px solid #f00;box-sizing:border-box;"></div>
<div class="r" style="left:629px;top:30px;width:11px;height:440px;background:#f1efe6;border-left:1px solid #fbfaf5;box-sizing:border-box;"></div>
<div class="r" style="left:630.5px;top:31px;width:9.5px;height:8px;background:#c4d3fb;border-radius:1px;"></div>
<svg class="r" style="left:630px;top:31px" width="10" height="8"><path d="M2.5 6 L5 3.6 L7.5 6" stroke="#2a2a2a" stroke-width="1.3" fill="none"/></svg>
<div class="r" style="left:630.5px;top:39px;width:9.5px;height:178px;background:linear-gradient(90deg,#c9d7fc,#b8cbf8);border-bottom:1px solid #97aee8;box-sizing:border-box;"></div>
<div class="r" style="left:632px;top:127px;width:4.5px;height:1px;background:#eef2fe;"></div>
<div class="r" style="left:632px;top:129.5px;width:4.5px;height:1px;background:#a9bdf0;"></div>
<div class="r" style="left:630.5px;top:39px;width:9.5px;height:1px;background:#e4ebfb;"></div>
<div class="r" style="left:638.6px;top:40px;width:1.4px;height:176px;background:#a6b9ee;"></div>
<div class="r" style="left:630.5px;top:459px;width:9.5px;height:9.5px;background:#c4d3fb;border-radius:1px;"></div>
<svg class="r" style="left:630px;top:459px" width="10" height="10"><path d="M2.5 3.8 L5 6.2 L7.5 3.8" stroke="#2a2a2a" stroke-width="1.3" fill="none"/></svg>
<div class="r" style="left:0px;top:469.4px;width:640px;height:10.6px;background:#f3f2ec;"></div>
<div class="r" style="left:0px;top:470.5px;width:9px;height:8px;background:#c4d3fb;"></div>
<svg class="r" style="left:0px;top:470px" width="9" height="9"><path d="M5.5 1.8 L3 4.3 L5.5 6.8" stroke="#2a2a2a" stroke-width="1.3" fill="none"/></svg>
<div class="r" style="left:11px;top:470.5px;width:602.4px;height:8px;background:linear-gradient(#d0dafc,#bccaf6);"></div>
<div class="r" style="left:309.5px;top:472px;width:1px;height:5px;background:#eef2fe;"></div>
<div class="r" style="left:310.5px;top:472.5px;width:0.8px;height:5px;background:#9fb2e8;"></div>
<div class="r" style="left:311.5px;top:472px;width:1px;height:5px;background:#eef2fe;"></div>
<div class="r" style="left:312.5px;top:472.5px;width:0.8px;height:5px;background:#9fb2e8;"></div>
<div class="r" style="left:313.5px;top:472px;width:1px;height:5px;background:#eef2fe;"></div>
<div class="r" style="left:314.5px;top:472.5px;width:0.8px;height:5px;background:#9fb2e8;"></div>
<div class="r" style="left:619px;top:470.6px;width:9px;height:7.8px;background:#c4d3fb;"></div>
<svg class="r" style="left:619px;top:470px" width="9" height="9"><path d="M3.5 1.8 L6 4.3 L3.5 6.8" stroke="#2a2a2a" stroke-width="1.3" fill="none"/></svg>
<div class="r" style="left:629px;top:469.4px;width:11px;height:9px;background:#ebe9dc;"></div>
<div class="r" style="left:0px;top:478.6px;width:640px;height:1.4px;background:#2b66da;"></div>
</body></html>
